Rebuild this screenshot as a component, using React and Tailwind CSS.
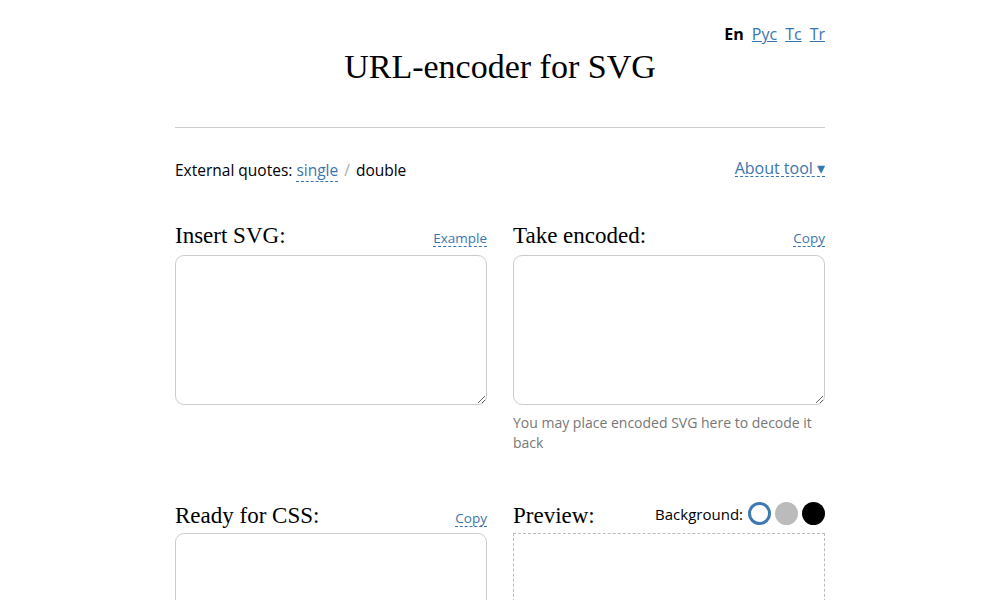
import { useState } from 'react';

const serif = "font-['Liberation_Serif',Georgia,serif]";

const DashLink = ({ children, className = '' }) => (
  <a
    href="#"
    className={`text-[#3a76ae] no-underline border-b border-dashed border-[#3a76ae] leading-[16px] ${className}`}
  >
    {children}
  </a>
);

const App = () => {
  const [bg, setBg] = useState('white');
  const [svg, setSvg] = useState('');
  const [encoded, setEncoded] = useState('');

  const swatches = [
    { id: 'white', cls: 'bg-white' },
    { id: 'silver', cls: 'bg-[#bbbbbb]' },
    { id: 'black', cls: 'bg-black' },
  ];

  return (
    <div className="min-h-[600px] bg-white text-black font-['Open_Sans','Noto_Sans',sans-serif]">
      <div className="w-[650px] mx-auto">
        <div className="flex justify-end gap-[8px] pt-[24px] text-[16px] leading-[20px]">
          <span className="font-bold">En</span>
          <a href="#" className="text-[#3a76ae] underline">Рус</a>
          <a href="#" className="text-[#3a76ae] underline">Tc</a>
          <a href="#" className="text-[#3a76ae] underline">Tr</a>
        </div>
        <h1 className={`${serif} text-center text-[34px] leading-[40px] mt-[3px]`}>
          URL-encoder for SVG
        </h1>
        <hr className="mt-[40px] border-0 border-t border-[#cccccc]" />

        <div className="flex justify-between items-start mt-[30px] text-[15.5px] leading-[24px]">
          <div>
            External quotes: <DashLink>single</DashLink>
            <span className="text-[#aaaaaa] mx-[6px]">/</span>
            double
          </div>
          <DashLink className="mt-[2px] text-[16px]">About tool ▾</DashLink>
        </div>

        <div className="grid grid-cols-2 gap-x-[26px] gap-y-[49px] mt-[40px]">
          <div>
            <div className="flex justify-between items-baseline mb-[5px]">
              <h2 className={`${serif} text-[23px] leading-[28px]`}>Insert SVG:</h2>
              <DashLink className="text-[13.5px]">Example</DashLink>
            </div>
            <textarea
              value={svg}
              onChange={(e) => setSvg(e.target.value)}
              className="block w-full h-[150px] border border-[#cccccc] rounded-[9px] p-2 text-[13px] outline-none"
            />
          </div>
          <div>
            <div className="flex justify-between items-baseline mb-[5px]">
              <h2 className={`${serif} text-[23px] leading-[28px]`}>Take encoded:</h2>
              <DashLink className="text-[13.5px]">Copy</DashLink>
            </div>
            <textarea
              value={encoded}
              onChange={(e) => setEncoded(e.target.value)}
              className="block w-full h-[150px] border border-[#cccccc] rounded-[9px] p-2 text-[13px] outline-none"
            />
            <p className="mt-[8px] text-[14px] leading-[20px] text-[#777777]">
              You may place encoded SVG here to decode it back
            </p>
          </div>

          <div>
            <div className="flex justify-between items-baseline mb-[3px]">
              <h2 className={`${serif} text-[23px] leading-[28px]`}>Ready for CSS:</h2>
              <DashLink className="text-[13.5px]">Copy</DashLink>
            </div>
            <textarea
              readOnly
              className="block w-full h-[150px] border border-[#cccccc] rounded-[9px] p-2 text-[13px] outline-none"
            />
          </div>
          <div>
            <div className="flex justify-between items-end mb-[6px]">
              <h2 className={`${serif} text-[23px] leading-[28px] mb-[-3px]`}>Preview:</h2>
              <div className="flex items-center gap-[4px] mb-[2px]">
                <span className="text-[15px] leading-[20px] mr-[1px]">Background:</span>
                {swatches.map((s) => (
                  <button
                    key={s.id}
                    onClick={() => setBg(s.id)}
                    className={`w-[23px] h-[23px] rounded-full ${s.cls} ${
                      bg === s.id ? 'border-[3px] border-[#3d7ab4]' : ''
                    }`}
                  />
                ))}
              </div>
            </div>
            <div
              className={`h-[150px] border border-dashed border-[#bbbbbb] ${
                bg === 'black' ? 'bg-black' : bg === 'silver' ? 'bg-[#bbbbbb]' : 'bg-white'
              }`}
            />
          </div>
        </div>
      </div>
    </div>
  );
};

export default App;
